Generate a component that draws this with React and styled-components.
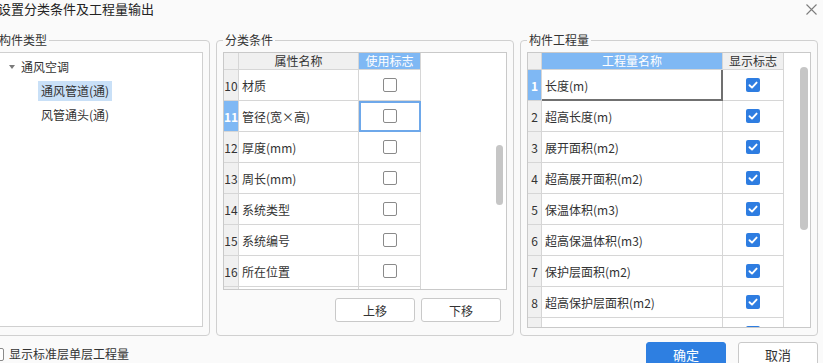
import styled, { createGlobalStyle } from 'styled-components'

const GlobalStyle = createGlobalStyle`
  body { margin: 0; background: #fafafa; color: #333; font-family: "Noto Sans CJK SC", "Microsoft YaHei", sans-serif; }
  * { box-sizing: border-box; }
`

// Window frame
const Dialog = styled.div`
  width: 823px; height: 363px; overflow: hidden; background: #fafafa;
  display: flex; flex-direction: column;
`
const TitleBar = styled.div`
  height: 32px; flex: none; display: flex; justify-content: space-between; align-items: flex-start; padding-right: 6px;
`
const Title = styled.span` font-size: 13px; line-height: 18px; margin-left: -2px; color: #222; `
const Close = styled.span` display: flex; margin-top: 4px; `

// Group boxes
const Body = styled.div` display: flex; gap: 6px; margin-left: -10px; `
const Group = styled.fieldset`
  margin: 0; min-width: 0; width: ${(p) => p.$w}px;
  border: 1px solid #d0d0d0; border-radius: 4px; padding: 4px 6px 7px;
  display: flex; flex-direction: column;
`
const Legend = styled.legend` padding: 0 2px; font-size: 12px; line-height: 16px; color: #333; `

// Tree
const TreePanel = styled.div`
  height: 275px; background: #fff; border: 1px solid #d0d0d0; padding-top: 4px;
  display: flex; flex-direction: column; gap: 4px;
`
const TreeRow = styled.div` display: flex; align-items: center; gap: 6px; height: 20px; padding-left: ${(p) => p.$indent}px; `
const TreeItem = styled.span`
  font-size: 12px; line-height: 20px; padding: 0 ${(p) => (p.$flush ? 0 : 3)}px;
  background: ${(p) => (p.$selected ? '#c9e0f7' : 'transparent')};
`

// Tables
const Table = styled.div`
  position: relative; background: #fff; border: 1px solid #c9c9c9; height: ${(p) => p.$h}px; overflow: hidden; flex: none;
`
const Row = styled.div` display: grid; grid-template-columns: ${(p) => p.$cols}; width: max-content; `
const Cell = styled.div`
  border-right: 1px solid #d6d6d6; border-bottom: 1px solid #d6d6d6;
  font-size: 12px; display: flex; align-items: center;
`
const HeadCell = styled(Cell)`
  height: 17px; justify-content: center; line-height: 16px;
  background: ${(p) => (p.$active ? '#7fb8f4' : '#f0f0f0')};
  color: ${(p) => (p.$active ? '#fff' : '#333')};
`
const NumCell = styled(Cell)`
  height: 31px; justify-content: center;
  background: ${(p) => (p.$active ? '#7fb8f4' : '#f0f0f0')};
  color: ${(p) => (p.$active ? '#fff' : '#333')};
  font-weight: ${(p) => (p.$active ? 700 : 400)};
`
const NameCell = styled(Cell)`
  height: 31px; padding-left: 3px; white-space: nowrap;
  ${(p) => p.$editing && `border-right-color: #707070; border-bottom-color: #707070; box-shadow: inset -1px -1px 0 #707070;`}
`
const FlagCell = styled(Cell)`
  height: 31px; justify-content: center;
  ${(p) => p.$focus && `outline: 2px solid #6ea8ea; outline-offset: -2px;`}
`
const Box = styled.span`
  width: ${(p) => p.$size || 14}px; height: ${(p) => p.$size || 14}px; border-radius: 2px; flex: none;
  display: flex; align-items: center; justify-content: center;
  background: ${(p) => (p.$checked ? '#2e7de1' : '#fff')};
  border: ${(p) => (p.$checked ? 'none' : '1px solid #8a8a8a')};
`
const Thumb = styled.div`
  position: absolute; right: ${(p) => p.$right}px; top: ${(p) => p.$top}px;
  width: ${(p) => p.$width}px; height: ${(p) => p.$height}px; border-radius: 4px; background: #c6c6c6;
`

// Buttons
const BtnRow = styled.div` display: flex; justify-content: flex-end; gap: 6px; margin-top: 8px; padding-right: 6px; `
const Button = styled.button`
  width: 80px; height: 24px; padding: 0; border-radius: 3px; cursor: pointer;
  border: 1px solid ${(p) => (p.$primary ? '#2e7fe1' : '#c9c9c9')};
  background: ${(p) => (p.$primary ? '#2e7fe1' : '#fff')};
  color: ${(p) => (p.$primary ? '#fff' : '#333')};
  font-family: "Noto Sans CJK SC", sans-serif; font-size: ${(p) => p.$fs || 12}px;
`

// Footer
const Footer = styled.div` display: flex; align-items: flex-start; margin-top: 6px; padding-right: 5px; `
const CheckLabel = styled.label` display: flex; align-items: center; gap: 5px; margin: 4px 0 0 -9px; font-size: 12px; line-height: 16px; `
const Actions = styled.div` display: flex; gap: 12px; margin-left: auto; `

const Check = ({ checked, size }) => (
  <Box $checked={checked} $size={size}>
    {checked && (
      <svg width="10" height="10" viewBox="0 0 10 10">
        <polyline points="1.5,5.2 4,7.6 8.6,2.6" fill="none" stroke="#fff" strokeWidth="1.9" strokeLinecap="round" strokeLinejoin="round" />
      </svg>
    )}
  </Box>
)

// last row of each list is only partly scrolled into view, so it carries no label
const conditions = [
  [10, '材质'], [11, '管径(宽×高)'], [12, '厚度(mm)'], [13, '周长(mm)'],
  [14, '系统类型'], [15, '系统编号'], [16, '所在位置'], [null, ''],
]
const quantities = [
  '长度(m)', '超高长度(m)', '展开面积(m2)', '超高展开面积(m2)', '保温体积(m3)',
  '超高保温体积(m3)', '保护层面积(m2)', '超高保护层面积(m2)', '',
]

const midCols = '15px 120px 62px'
const rightCols = '14px 181px 61px'

export default function App() {
  return (
    <>
      <GlobalStyle />
      <Dialog>
        <TitleBar>
          <Title>设置分类条件及工程量输出</Title>
          <Close>
            <svg width="11" height="11" viewBox="0 0 11 11">
              <path d="M0.5 0.5L10.5 10.5M10.5 0.5L0.5 10.5" stroke="#7c7c7c" strokeWidth="1.1" />
            </svg>
          </Close>
        </TitleBar>

        <Body>
          <Group $w={220}>
            <Legend>构件类型</Legend>
            <TreePanel>
              <TreeRow $indent={11}>
                <svg width="6" height="4" viewBox="0 0 6 4"><polygon points="0,0 6,0 3,4" fill="#7a7a7a" /></svg>
                <TreeItem $flush>通风空调</TreeItem>
              </TreeRow>
              <TreeRow $indent={40}><TreeItem $selected>通风管道(通)</TreeItem></TreeRow>
              <TreeRow $indent={40}><TreeItem>风管通头(通)</TreeItem></TreeRow>
            </TreePanel>
          </Group>

          <Group $w={298}>
            <Legend>分类条件</Legend>
            <Table $h={238}>
              <Row $cols={midCols}>
                <HeadCell />
                <HeadCell>属性名称</HeadCell>
                <HeadCell $active>使用标志</HeadCell>
              </Row>
              {conditions.map(([n, name], i) => (
                <Row key={i} $cols={midCols}>
                  <NumCell $active={n === 11}>{n}</NumCell>
                  <NameCell>{name}</NameCell>
                  <FlagCell $focus={n === 11}><Check /></FlagCell>
                </Row>
              ))}
              <Thumb $right={3} $top={92} $width={7} $height={60} />
            </Table>
            <BtnRow>
              <Button>上移</Button>
              <Button>下移</Button>
            </BtnRow>
          </Group>

          <Group $w={298}>
            <Legend>构件工程量</Legend>
            <Table $h={276}>
              <Row $cols={rightCols}>
                <HeadCell />
                <HeadCell $active>工程量名称</HeadCell>
                <HeadCell>显示标志</HeadCell>
              </Row>
              {quantities.map((name, i) => (
                <Row key={i} $cols={rightCols}>
                  <NumCell $active={i === 0}>{name ? i + 1 : ''}</NumCell>
                  <NameCell $editing={i === 0}>{name}</NameCell>
                  <FlagCell><Check checked /></FlagCell>
                </Row>
              ))}
              <Thumb $right={2} $top={14} $width={8} $height={163} />
            </Table>
          </Group>
        </Body>

        <Footer>
          <CheckLabel><Check size={13} />显示标准层单层工程量</CheckLabel>
          <Actions>
            <Button $primary $fs={13}>确定</Button>
            <Button $fs={13}>取消</Button>
          </Actions>
        </Footer>
      </Dialog>
    </>
  )
}
